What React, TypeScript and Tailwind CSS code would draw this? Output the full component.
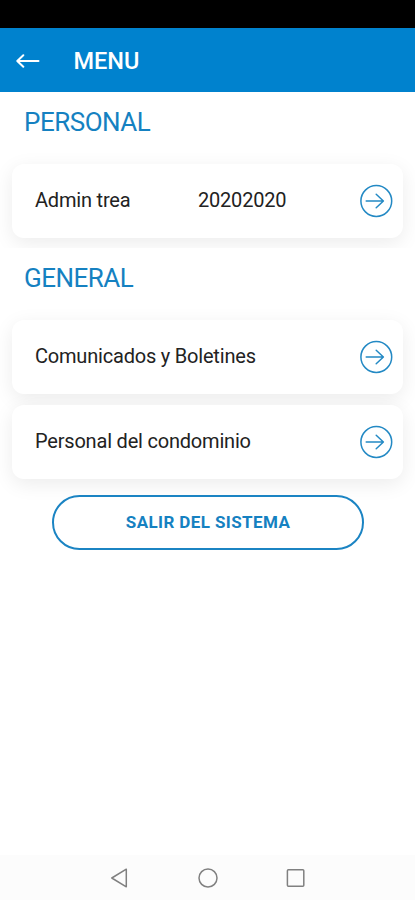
interface MenuCardProps {
  label: string;
  value?: string;
}

function GoIcon() {
  return (
    <svg
      className="ml-auto h-[34px] w-[34px] shrink-0 text-[#2389c4]"
      viewBox="0 0 34 34"
      fill="none"
      stroke="currentColor"
      strokeWidth="1.5"
      strokeLinecap="round"
      strokeLinejoin="round"
    >
      <circle cx="17.3" cy="17" r="15.4" />
      <path d="M7.2 17H24M17.2 10.2l7.2 6.8-7.2 6.8" />
    </svg>
  );
}

function MenuCard({ label, value }: MenuCardProps) {
  return (
    <button className="relative flex h-[74px] w-full items-center rounded-xl bg-white pr-[10px] pb-px pl-[23px] text-left text-[20px] tracking-[-0.2px] text-[#222222] shadow-[0_5px_20px_rgba(0,0,0,0.08)]">
      <span className={value ? "w-[163px] pb-px" : "pb-px whitespace-nowrap"}>{label}</span>
      {value && <span className="pb-px">{value}</span>}
      <GoIcon />
    </button>
  );
}

function SectionTitle({ children }: { children: string }) {
  return (
    <h2 className="pl-3 text-[26px] leading-[30px] tracking-[-0.5px] text-[#1581c1]">
      {children}
    </h2>
  );
}

export default function App() {
  return (
    <div className="flex h-[900px] w-[415px] flex-col overflow-hidden bg-white font-['Roboto',sans-serif]">
      <div className="h-7 shrink-0 bg-black" />

      <header className="flex h-16 shrink-0 items-center bg-[#0082ce] pt-px pl-4 text-white">
        <svg
          className="h-4 w-6"
          viewBox="0 0 24 16"
          fill="none"
          stroke="currentColor"
          strokeWidth="2"
          strokeLinecap="round"
          strokeLinejoin="round"
        >
          <path d="M22.5 8H1.5M7.3 2.2L1.3 8l6 5.8" />
        </svg>
        <h1 className="ml-[33.5px] pt-px text-[23.5px] leading-8 font-medium">MENU</h1>
      </header>

      <main className="flex flex-1 flex-col px-3 pt-[15px]">
        <SectionTitle>PERSONAL</SectionTitle>
        <div className="mt-[27px]">
          <MenuCard label="Admin trea" value="20202020" />
        </div>

        {/* The white background cuts off the shadow of the card above */}
        <div className="relative -mx-3 mt-[10px] bg-white px-3 pt-[15px]">
          <SectionTitle>GENERAL</SectionTitle>
        </div>
        <div className="mt-[27px] flex flex-col gap-[11px]">
          <MenuCard label="Comunicados y Boletines" />
          <MenuCard label="Personal del condominio" />
        </div>

        <button className="relative mt-4 ml-10 h-[55px] w-[312px] rounded-full border-2 border-[#1b84c3] bg-white text-[17px] font-bold tracking-[0.4px] text-[#1581c1]">
          SALIR DEL SISTEMA
        </button>
      </main>

      <nav className="flex h-[45px] shrink-0 items-center justify-center gap-[68px] bg-[#fcfcfc] text-[#808080]">
        <svg className="h-5 w-5" viewBox="0 0 20 20" fill="none" stroke="currentColor" strokeWidth="1.5" strokeLinejoin="round">
          <path d="M16.3 1.2v17.6L1.8 10z" />
        </svg>
        <svg className="h-5 w-5" viewBox="0 0 20 20" fill="none" stroke="currentColor" strokeWidth="1.5">
          <circle cx="10" cy="10" r="9" />
        </svg>
        <svg className="h-5 w-5" viewBox="0 0 20 20" fill="none" stroke="currentColor" strokeWidth="1.5">
          <rect x="1.4" y="1.8" width="16.4" height="16.4" rx="1" />
        </svg>
      </nav>
    </div>
  );
}
